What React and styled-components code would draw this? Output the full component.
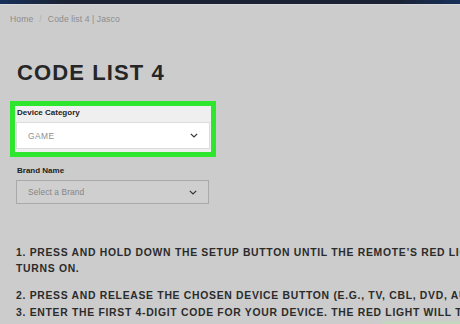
import React from 'react';
import styled, { createGlobalStyle } from 'styled-components';

const GlobalStyle = createGlobalStyle`
  html, body {
    margin: 0;
    padding: 0;
    background: #cccccc;
    overflow: hidden;
  }
  body {
    font-family: 'Liberation Sans', Arial, sans-serif;
  }
`;

const TopBar = styled.div`
  height: 4px;
  background: linear-gradient(90deg, #17305a 0%, #1b2233 14%, #1b2233 86%, #17305a 100%);
  border-bottom: 1px solid #d6d8de;
`;

const Page = styled.div`
  width: 540px;
  padding: 0 0 0 16px;
`;

const Crumbs = styled.nav`
  display: flex;
  gap: 6px;
  margin: 8px 0 0 -6px;
  font-size: 8.6px;
  line-height: 12px;
  letter-spacing: 0.1px;
  color: #8c8c8c;
  span.sep {
    color: #b0b0b0;
  }
`;

const Title = styled.h1`
  margin: 35px 0 0 1px;
  font-size: 22px;
  line-height: 26px;
  font-weight: 700;
  letter-spacing: 1.1px;
  color: #262626;
`;

const Field = styled.div`
  margin: ${(p) => (p.$highlight ? '15px 0 0 -6px' : '9px 0 0 0')};
  padding: ${(p) => (p.$highlight ? '2px 1px 3px 1px' : '0')};
  border: ${(p) => (p.$highlight ? '5px solid #2ee62e' : 'none')};
  background: ${(p) => (p.$highlight ? '#efefef' : 'transparent')};
  width: ${(p) => (p.$highlight ? '194px' : '193px')};
`;

const Label = styled.div`
  font-size: 8px;
  line-height: 10px;
  font-weight: 700;
  color: #222;
  margin: 0 0 4px 1px;
`;

const Select = styled.div`
  display: flex;
  align-items: center;
  justify-content: space-between;
  height: ${(p) => (p.$filled ? '27px' : '24px')};
  box-sizing: border-box;
  padding: 0 11px 0 11px;
  background: ${(p) => (p.$filled ? '#ffffff' : '#cfcfcf')};
  border: 1px solid ${(p) => (p.$filled ? '#dcdcdc' : '#a9a9a9')};
  font-size: 8.4px;
  color: ${(p) => (p.$filled ? '#8f8f8f' : '#858585')};
  letter-spacing: ${(p) => (p.$filled ? '0.5px' : '0.1px')};
`;

const Chevron = () => (
  <svg width="8" height="5" viewBox="0 0 8 5">
    <path d="M0.8 0.8 L4 4 L7.2 0.8" fill="none" stroke="#333" strokeWidth="1.2" />
  </svg>
);

const Steps = styled.div`
  margin-top: 41px;
  width: 480px;
  font-size: 10.4px;
  line-height: 16px;
  font-weight: 700;
  letter-spacing: 0.7px;
  color: #2b2b2b;
  text-transform: uppercase;
`;

const Step = styled.p`
  margin: 0 0 ${(p) => p.$gap}px 0;
`;

const Corner = styled.div`
  position: fixed;
  right: 0;
  bottom: 0;
  width: 78px;
  height: 3px;
  background: #c4d6bf;
  border-radius: 3px 0 0 0;
`;

export default function App() {
  return (
    <>
      <GlobalStyle />
      <TopBar />
      <Page>
        <Crumbs>
          <span>Home</span>
          <span className="sep">/</span>
          <span>Code list 4 | Jasco</span>
        </Crumbs>
        <Title>CODE LIST 4</Title>
        <Field $highlight>
          <Label>Device Category</Label>
          <Select $filled>
            GAME
            <Chevron />
          </Select>
        </Field>
        <Field>
          <Label>Brand Name</Label>
          <Select>
            Select a Brand
            <Chevron />
          </Select>
        </Field>
        <Steps>
          <Step $gap={11}>1. Press and hold down the SETUP button until the remote’s red light turns on.</Step>
          <Step $gap={1}>2. Press and release the chosen device button (e.g., TV, CBL, DVD, AUX).</Step>
          <Step $gap={0}>3. Enter the first 4-digit code for your device. The red light will turn off.</Step>
        </Steps>
      </Page>
      <Corner />
    </>
  );
}
